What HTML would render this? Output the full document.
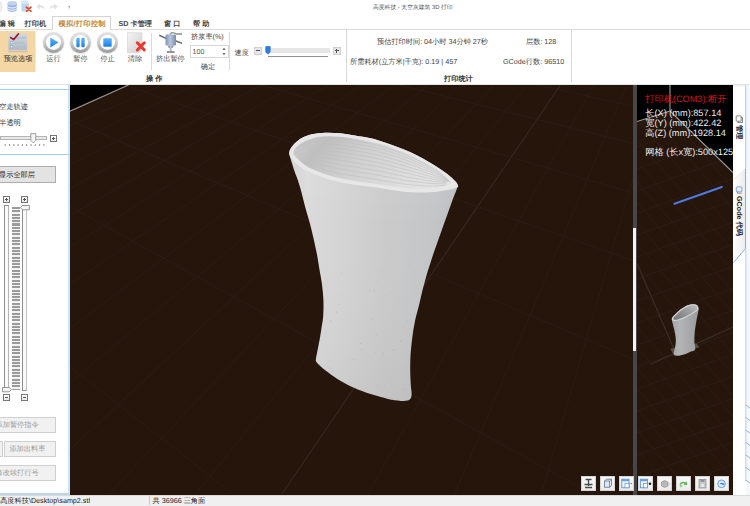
<!DOCTYPE html>
<html lang="zh">
<head>
<meta charset="utf-8">
<title>高度科技 - 太空灰建筑 3D 打印</title>
<style>
*{box-sizing:border-box;margin:0;padding:0}
html,body{width:750px;height:506px;overflow:hidden;background:#fff}
body{font-family:"Liberation Sans",sans-serif;font-size:7.2px;color:#3c3c3c;position:relative;text-rendering:geometricPrecision}
.abs{position:absolute}
.t{position:absolute;white-space:nowrap;line-height:10px;height:10px}
.c{text-align:center}
/* title bar */
#title{left:373px;top:3px;font-size:5.8px;color:#555;width:79px;text-align:center}
/* tabs */
.tab{position:absolute;top:18px;font-weight:bold;font-size:7.2px;color:#444;white-space:nowrap;line-height:11px}
#tabact{position:absolute;left:52px;top:15.5px;width:59px;height:14px;border:1px solid #d4d4d4;border-bottom:none;background:#fff}
#tabline{position:absolute;left:0;top:28.5px;width:750px;height:1px;background:#dcdcdc}
#ribbottom{position:absolute;left:0;top:84px;width:750px;height:1px;background:#e4e4e4}
.vsep{position:absolute;width:1px;background:#dadada}
.lbl{position:absolute;top:54px;height:10px;line-height:10px;color:#555;white-space:nowrap;text-align:center}
.grp{position:absolute;top:74px;height:10px;line-height:10px;color:#333;font-weight:bold;white-space:nowrap}
/* round buttons */
.rb{position:absolute;top:32.3px;width:21px;height:21px;border-radius:50%;background:linear-gradient(#e4e4e4,#d0d0d0 45%,#989898);box-shadow:0 .6px 1.2px rgba(0,0,0,.25)}
.rb i{position:absolute;left:3.1px;top:3.1px;width:14.8px;height:14.8px;border-radius:50%;background:radial-gradient(circle at 50% 35%,#fff 55%,#e6e9ee 100%)}
/* left panel */
#left{position:absolute;left:0;top:85px;width:70.2px;height:409.5px;background:#fff;border-right:2.2px solid #c6e5fa;border-bottom:2.2px solid #b9d6ec}
.hl{position:absolute;left:0;width:68.5px;height:1.1px;background:#a6cbe6}
.btn{position:absolute;height:17px;line-height:15.5px;border:1px solid #adadad;background:#e3e3e3;color:#222;white-space:nowrap}
.btn.dis{background:#f1f1f1;border-color:#cfcfcf;color:#9a9a9a;height:15.5px;line-height:14px}
.pm{position:absolute;width:7.2px;height:7.2px;border:1px solid #777;background:linear-gradient(#fff,#e8e8e8)}
.pm:before{content:"";position:absolute;left:1px;right:1px;top:2px;height:1px;background:#555}
.pm.plus:after{content:"";position:absolute;top:1px;bottom:1px;left:2px;width:1px;background:#555}
/* viewports */
#vp{position:absolute;left:70.2px;top:85px;width:562.8px;height:409.5px;background:#25150b;overflow:hidden}
#split{position:absolute;left:632.6px;top:85px;width:4px;height:409.5px;background:#474747}
#vp2{position:absolute;left:636.5px;top:85px;width:96px;height:409.5px;background:#25150b;overflow:hidden}
.info{position:absolute;left:8.8px;font-size:9.2px;line-height:10px;color:#eeeeee;white-space:nowrap}
#rstrip{position:absolute;left:732.5px;top:85px;width:17.5px;height:409.5px;background:#fff}
#status{position:absolute;left:0;top:494.5px;width:750px;height:11.5px;background:#f0f0f0;border-top:1px solid #d9d9d9}
.tb{position:absolute;top:391px;width:15.2px;height:15.3px;background:linear-gradient(#f8f8f8,#ececec);border:1px solid #d4d4d4}
.vt{position:absolute;white-space:nowrap;font-size:7.2px;font-weight:bold;color:#222;line-height:9px;height:9px;transform-origin:0 0;transform:rotate(90deg)}
</style>
</head>
<body>

<!-- ===== title bar ===== -->
<svg class="abs" style="left:0;top:0" width="80" height="14" viewBox="0 0 80 14">
  <rect x="0" y="1.500" width="2.300" height="10" fill="#ececec"/>
  <path d="M7.500 3.300v6.400c0 1.200 2.100 2.100 4.700 2.100s4.700-.9 4.700-2.100V3.300z" fill="#9db3e6"/>
  <ellipse cx="12.200" cy="3.300" rx="4.700" ry="2.200" fill="#c3d2f2"/>
  <path d="M7.500 5.900c0 1.200 2.100 2.100 4.700 2.100s4.700-.9 4.700-2.100M7.500 8.200c0 1.200 2.100 2.100 4.700 2.100s4.700-.9 4.700-2.100" fill="none" stroke="#f2f5fc" stroke-width="1"/>
  <path d="M21.500 .800h5.300l2 2v8.600h-7.300z" fill="#bcd6f1"/>
  <path d="M21.500 .800h5.300l2 2v1h-7.300z" fill="#d9e8f8"/>
  <path d="M26.600 7.300l4.200 3.800m0-3.800l-4.200 3.800" stroke="#e64a2a" stroke-width="1.900" stroke-linecap="round"/>
  <path d="M36.300 6.600l3.800-3v1.700c2.600 0 4.300 1.300 4.800 3.900-1.300-1.400-2.700-1.800-4.800-1.700v2z" fill="#e2e2e2"/>
  <path d="M58 6.600l-3.800-3v1.700c-2.600 0-4.300 1.300-4.800 3.900 1.300-1.400 2.700-1.800 4.800-1.700v2z" fill="#e2e2e2"/>
  <rect x="68.500" y="5.900" width="1.400" height=".8" fill="#777"/><rect x="68.700" y="7.400" width="1" height=".8" fill="#777"/>
</svg>
<div class="t" id="title">高度科技 - 太空灰建筑 3D 打印</div>

<!-- ===== tabs ===== -->
<div id="tabline"></div>
<div id="tabact"></div>
<div class="tab" style="left:-1.500px">编 辑</div>
<div class="tab" style="left:24.500px">打印机</div>
<div class="tab" style="left:58.500px;color:#c4862a;letter-spacing:.3px">模拟/打印控制</div>
<div class="tab" style="left:118.500px">SD 卡管理</div>
<div class="tab" style="left:164px">窗 口</div>
<div class="tab" style="left:193px">帮 助</div>

<!-- ===== ribbon body ===== -->
<div class="abs" style="left:0;top:30.800px;width:35.800px;height:41.600px;background:#f5d7a6;border-right:1px solid #fae6c8"></div>
<svg class="abs" style="left:8px;top:33px" width="21" height="21" viewBox="0 0 21 21">
  <defs><linearGradient id="ck" x1="0" y1="0" x2="0" y2="1"><stop offset="0" stop-color="#d3d7dc"/><stop offset="1" stop-color="#b4bac2"/></linearGradient></defs>
  <rect x=".4" y=".6" width="18.800" height="16.600" fill="url(#ck)"/>
  <rect x="0" y="18.200" width="20" height="1" fill="#b9b9b9"/>
  <path d="M7 4.900h11M7 9.800h9M7 13.800h11" stroke="#a9bfd8" stroke-width="1.100"/>
  <rect x="2.600" y="8.700" width="2.200" height="2.200" fill="#e6edf4" stroke="#8fa5bd" stroke-width=".5"/>
  <rect x="2.600" y="12.700" width="2.200" height="2.200" fill="#e6edf4" stroke="#8fa5bd" stroke-width=".5"/>
  <path d="M2.700 4.600l3 1.900L10.300 1" fill="none" stroke="#a3122e" stroke-width="1.700" stroke-linecap="round" stroke-linejoin="round"/>
</svg>
<div class="lbl" style="left:0;width:36px;color:#2e2e2e">预览选项</div>

<div class="rb" style="left:43px"><i></i></div>
<svg class="abs" style="left:43px;top:32.300px" width="21" height="21" viewBox="0 0 21 21"><defs><linearGradient id="bl" x1="0" y1="0" x2="0" y2="1"><stop offset="0" stop-color="#5db4ff"/><stop offset="1" stop-color="#1d7fe6"/></linearGradient></defs><path d="M7.300 5.500l8.200 5-8.200 5z" fill="url(#bl)"/></svg>
<div class="lbl" style="left:43px;width:21px">运行</div>

<div class="rb" style="left:70px"><i></i></div>
<svg class="abs" style="left:70px;top:32.300px" width="21" height="21" viewBox="0 0 21 21"><rect x="6.300" y="5.800" width="3.400" height="9.400" rx="1.200" fill="url(#bl)"/><rect x="11.300" y="5.800" width="3.400" height="9.400" rx="1.200" fill="url(#bl)"/></svg>
<div class="lbl" style="left:70px;width:21px">暂停</div>

<div class="rb" style="left:97.200px"><i></i></div>
<svg class="abs" style="left:97.200px;top:32.300px" width="21" height="21" viewBox="0 0 21 21"><rect x="6.300" y="6.300" width="8.400" height="8.400" rx=".8" fill="url(#bl)"/></svg>
<div class="lbl" style="left:97.200px;width:21px">停止</div>

<svg class="abs" style="left:125px;top:31px" width="24" height="24" viewBox="0 0 24 24">
  <defs><linearGradient id="dg" x1="0" y1="0" x2="1" y2="1"><stop offset="0" stop-color="#f4f4f4"/><stop offset="1" stop-color="#cfcfcf"/></linearGradient></defs>
  <path d="M2.500 1.700h14.500v17l-3 3h-11.500z" fill="url(#dg)" stroke="#d0d0d0" stroke-width=".6"/>
  <path d="M12.300 11.800l7 7.200m0-7.200l-7 7.200" stroke="#e8392e" stroke-width="3" stroke-linecap="round"/>
</svg>
<div class="lbl" style="left:124px;width:22px">清除</div>

<div class="vsep" style="left:150.500px;top:32.500px;height:37px"></div>

<svg class="abs" style="left:158px;top:31px" width="26" height="24" viewBox="0 0 26 24">
  <defs><linearGradient id="ex" x1="0" y1="0" x2="1" y2="0"><stop offset="0" stop-color="#8193b4"/><stop offset=".45" stop-color="#b9c6dc"/><stop offset="1" stop-color="#7b8cab"/></linearGradient></defs>
  <path d="M1.300 4.300l7.400 3.400M17.300 9.700l6.700 2.600" stroke="#6f6f6f" stroke-width="1.500"/>
  <path d="M12 4.500c0-2.500 2.500-3.500 4.500-2.500 1 .5 1.500 1 2.500 1h5" fill="none" stroke="#8c8c8c" stroke-width="1.300"/>
  <rect x="7.500" y="3.500" width="10.500" height="11" rx="1.200" fill="url(#ex)"/>
  <path d="M9.500 14.500h6.500l-1.300 2.500h-3.900z" fill="#8c99b2"/>
  <rect x="11.700" y="15" width="2" height="5.500" fill="#b5b9c2"/>
  <rect x="8.700" y="20.300" width="8" height="1.400" fill="#6f6f6f"/>
</svg>
<div class="lbl" style="left:156px;width:28px">挤出暂停</div>

<div class="lbl" style="left:191px;top:32px;width:32px;color:#444">挤浆率(%)</div>
<div class="abs" style="left:190px;top:45px;width:38.500px;height:13px;border:1px solid #d6d6d6;background:#fff"></div>
<div class="t" style="left:192.600px;top:46.500px;color:#555">100</div>
<svg class="abs" style="left:221px;top:46px" width="6" height="11" viewBox="0 0 6 11"><path d="M1.300 3.800L3 2l1.700 1.800zM1.300 7.200L3 9l1.700-1.800z" fill="#444"/></svg>
<div class="lbl" style="left:198px;top:61.500px;width:20px;color:#444">确定</div>
<div class="vsep" style="left:229.300px;top:32px;height:38px"></div>

<div class="t" style="left:234.500px;top:47.500px;color:#444">速度</div>
<div class="abs" style="left:254px;top:47px;width:7.500px;height:7.500px;background:#e6e6e6;border:1px solid #cfcfcf"></div>
<div class="abs" style="left:256px;top:50.300px;width:3.500px;height:1px;background:#555"></div>
<div class="abs" style="left:264.500px;top:48px;width:65.500px;height:5px;background:#e6e6e6"></div>
<div class="abs" style="left:267.500px;top:55.800px;width:60.500px;height:1.400px;background:#909090"></div>
<svg class="abs" style="left:264.500px;top:45.500px" width="7" height="9" viewBox="0 0 7 9"><path d="M.8.500h4.400v5.500L3 8.300.8 6z" fill="#2f80e0" stroke="#1c62b8" stroke-width=".6"/></svg>
<div class="abs" style="left:333px;top:47px;width:7.500px;height:7.500px;background:#e6e6e6;border:1px solid #cfcfcf"></div>
<div class="abs" style="left:335px;top:50.300px;width:3.500px;height:1px;background:#555"></div>
<div class="abs" style="left:336.250px;top:49px;width:1px;height:3.500px;background:#555"></div>

<div class="grp" style="left:146px">操 作</div>
<div class="vsep" style="left:346px;top:29px;height:53px"></div>

<div class="t" style="left:377px;top:36.500px;color:#444">预估打印时间: 04小时 34分钟 27秒</div>
<div class="t" style="left:526px;top:36.500px;color:#444">层数: 128</div>
<div class="t" style="left:350px;top:56.800px;color:#444">所需耗材(立方米|千克): 0.19 | 457</div>
<div class="t" style="left:503px;top:56.800px;color:#444">GCode行数: 96510</div>
<div class="grp" style="left:444px">打印统计</div>
<div class="vsep" style="left:571px;top:29px;height:53px"></div>
<div id="ribbottom"></div>

<!-- ===== left panel ===== -->
<div id="left">
  <div class="hl" style="top:4px"></div>
  <div class="t" style="left:-.8px;top:16.500px;color:#333">空走轨迹</div>
  <div class="t" style="left:-.8px;top:32.500px;color:#333">半透明</div>
  <div class="abs" style="left:0;top:51px;width:46.500px;height:4px;border:1px solid #b5b5b5;background:#e9e9e9"></div>
  <svg class="abs" style="left:29.500px;top:48px" width="7" height="11" viewBox="0 0 7 11"><path d="M.8.600h5v6.800L3.300 10 .8 7.400z" fill="#f4f4f4" stroke="#8a8a8a" stroke-width=".8"/></svg>
  <div class="pm plus" style="left:49.500px;top:49.800px"></div>
  <svg class="abs" style="left:0;top:58.500px" width="48" height="3" viewBox="0 0 48 3"><path d="M5.2 0v2M9.5 0v2M13.8 0v2M18.1 0v2M22.4 0v2M26.7 0v2M31.0 0v2M35.3 0v2M39.6 0v2M43.9 0v2" stroke="#777" stroke-width=".8"/></svg>
  <div class="hl" style="top:69px"></div>
  <div class="btn" style="left:-6px;top:80.800px;width:62.300px;padding-left:4px">显示全部层</div>

  <div class="pm plus" style="left:3.200px;top:110.500px"></div>
  <div class="pm plus" style="left:21.300px;top:110.500px"></div>
  <!-- vertical sliders -->
  <div class="abs" style="left:4.300px;top:120.200px;width:4.600px;height:186px;border:1px solid #8e8e8e;border-right-color:#b4b4b4;background:#fafafa"></div>
  <div class="abs" style="left:11.900px;top:122px;width:7.900px;height:182.500px;background:repeating-linear-gradient(#9b9b9b 0,#9b9b9b 2px,#f3f3f3 2px,#f3f3f3 3.300px)"></div>
  <div class="abs" style="left:22.100px;top:120.200px;width:5.400px;height:186px;border:1px solid #8e8e8e;border-right-color:#c4c4c4;background:#fafafa"></div>
  <svg class="abs" style="left:20.200px;top:120px" width="10" height="6" viewBox="0 0 10 6"><path d="M2.500.500h6.900v4.300H2.500L.5 2.600z" fill="#f6f6f6" stroke="#7d7d7d" stroke-width=".8"/></svg>
  <svg class="abs" style="left:1.500px;top:301.500px" width="10" height="6" viewBox="0 0 10 6"><path d="M7.300.500H.5v4.300h6.800l2-2.200z" fill="#f6f6f6" stroke="#7d7d7d" stroke-width=".8"/></svg>
  <div class="pm" style="left:3.200px;top:309.100px"></div>
  <div class="pm" style="left:21.300px;top:309.100px"></div>

  <div class="btn dis" style="left:-6px;top:332px;width:61.500px;padding-left:.5px">添加暂停指令</div>
  <div class="btn dis" style="left:-6px;top:356px;width:9px"></div>
  <div class="btn dis" style="left:4px;top:356px;width:51.500px;padding-left:4.400px">添加出料率</div>
  <div class="btn dis" style="left:-6px;top:380px;width:61.500px;padding-left:.5px">修改续打行号</div>
</div>

<!-- ===== main viewport ===== -->
<div id="vp">
<svg class="abs" style="left:0;top:0" width="563" height="410" viewBox="0 0 563 410">
  <defs>
    <linearGradient id="body" x1="0" y1="0" x2="1" y2="0">
      <stop offset="0" stop-color="#d0d0d0"/><stop offset=".1" stop-color="#dadada"/><stop offset=".3" stop-color="#d4d4d4"/><stop offset=".55" stop-color="#cbcbcb"/><stop offset=".85" stop-color="#c4c5c7"/><stop offset="1" stop-color="#bbbec3"/>
    </linearGradient>
    <linearGradient id="bodyv" x1="0" y1="0" x2="0" y2="1">
      <stop offset="0" stop-color="#fff" stop-opacity=".12"/><stop offset=".35" stop-color="#fff" stop-opacity="0"/><stop offset="1" stop-color="#000" stop-opacity=".04"/>
    </linearGradient>
    <clipPath id="vclip"><path d="M289.3 152.3C289.0 155.0 290.4 157.8 291.3 161.0C292.2 164.2 293.6 168.5 294.7 171.7C295.8 174.9 296.7 176.6 297.8 180.0C298.9 183.4 300.1 187.2 301.4 191.9C302.7 196.7 304.2 203.4 305.6 208.5C307.0 213.6 308.4 217.9 309.7 222.7C311.0 227.4 312.0 231.8 313.2 237.0C314.4 242.2 315.7 248.1 316.8 253.6C317.9 259.1 318.7 265.1 319.6 270.2C320.5 275.3 321.4 279.5 322.0 284.5C322.6 289.5 323.2 294.8 323.4 300.0C323.6 305.2 323.5 311.3 323.2 316.0C322.9 320.7 322.1 324.0 321.5 328.0C320.9 332.0 320.3 335.9 319.6 339.8C318.9 343.7 317.9 348.4 317.3 351.6C316.7 354.8 316.1 357.0 316.0 358.8C315.9 360.6 315.2 360.5 316.8 362.5C318.4 364.5 322.2 367.9 325.6 370.6C329.0 373.3 333.1 376.2 337.4 378.9C341.7 381.6 346.9 384.4 351.6 386.7C356.4 388.9 360.4 390.5 365.9 392.4C371.4 394.3 380.5 396.7 384.8 397.9C389.1 399.1 388.8 399.2 391.9 399.7C395.0 400.2 400.7 401.0 403.7 401.0C406.7 401.0 408.4 400.7 409.7 399.6C411.0 398.5 411.4 396.9 411.6 394.5C411.8 392.1 411.0 389.0 410.8 385.0C410.6 381.0 410.2 375.9 410.2 370.7C410.2 365.5 410.2 359.5 410.6 354.0C411.0 348.5 411.6 343.0 412.3 337.5C413.0 332.0 413.8 326.5 415.0 320.9C416.2 315.3 418.1 309.0 419.3 304.0C420.5 299.0 421.2 295.3 422.3 291.0C423.4 286.7 424.5 282.7 425.8 278.0C427.1 273.3 428.8 267.9 430.4 263.0C431.9 258.1 433.3 253.9 435.1 248.8C436.9 243.7 439.0 237.7 441.0 232.2C443.0 226.7 445.0 221.1 447.0 215.6C449.0 210.1 451.2 203.5 452.9 199.0C454.6 194.5 456.2 190.8 457.0 188.5C457.8 186.2 458.2 186.7 457.9 185.5C457.6 184.3 457.1 183.2 455.3 181.3C453.5 179.4 450.4 176.4 447.3 174.0C444.2 171.6 440.7 169.2 436.7 166.7C432.7 164.1 427.8 161.1 423.3 158.7C418.9 156.2 414.4 154.0 410.0 152.0C405.6 150.0 401.1 148.4 396.7 146.7C392.2 145.0 387.6 143.4 383.3 142.0C379.0 140.6 375.5 139.4 370.7 138.3C365.9 137.2 359.8 136.2 354.7 135.4C349.6 134.6 344.9 133.8 340.0 133.3C335.1 132.9 330.0 132.5 325.3 132.7C320.6 132.9 316.0 133.4 312.0 134.3C308.0 135.2 304.4 136.5 301.3 138.3C298.2 140.1 295.3 142.7 293.3 145.0C291.3 147.3 289.6 149.6 289.3 152.3Z"/></clipPath>
    <linearGradient id="inner" x1="0" y1="0" x2="1" y2=".3">
      <stop offset="0" stop-color="#cecece"/><stop offset=".22" stop-color="#bfbfbf"/><stop offset=".5" stop-color="#d0d0d0"/><stop offset="1" stop-color="#e2e2e2"/>
    </linearGradient>
  </defs>
  <!-- black beyond floor edge -->
  <path d="M0 0h58.700L0 26.200z" fill="#000"/>
  <g fill="none">
<line x1="563.0" y1="376.8" x2="557.8" y2="409.5" stroke="#2c1d15" stroke-width="0.9"/>
<line x1="563.0" y1="93.2" x2="471.2" y2="409.5" stroke="#2c1d15" stroke-width="0.9"/>
<line x1="556.8" y1="0.0" x2="384.7" y2="409.5" stroke="#2c1d15" stroke-width="0.9"/>
<line x1="523.6" y1="0.0" x2="298.2" y2="409.5" stroke="#2c1d15" stroke-width="0.9"/>
<line x1="490.4" y1="0.0" x2="211.6" y2="409.5" stroke="#362921" stroke-width="1.1"/>
<line x1="457.2" y1="0.0" x2="125.1" y2="409.5" stroke="#2c1d15" stroke-width="0.9"/>
<line x1="424.0" y1="0.0" x2="38.6" y2="409.5" stroke="#2c1d15" stroke-width="0.9"/>
<line x1="390.8" y1="0.0" x2="0.0" y2="364.7" stroke="#2c1d15" stroke-width="0.9"/>
<line x1="357.6" y1="0.0" x2="0.0" y2="297.6" stroke="#2c1d15" stroke-width="0.9"/>
<line x1="324.4" y1="0.0" x2="0.0" y2="243.5" stroke="#2c1d15" stroke-width="0.9"/>
<line x1="291.2" y1="0.0" x2="0.0" y2="199.1" stroke="#2c1d15" stroke-width="0.9"/>
<line x1="258.0" y1="0.0" x2="0.0" y2="162.0" stroke="#2c1d15" stroke-width="0.9"/>
<line x1="224.7" y1="0.0" x2="0.0" y2="130.5" stroke="#2c1d15" stroke-width="0.9"/>
<line x1="191.5" y1="0.0" x2="0.0" y2="103.4" stroke="#2c1d15" stroke-width="0.9"/>
<line x1="158.3" y1="0.0" x2="0.0" y2="79.8" stroke="#2c1d15" stroke-width="0.9"/>
<line x1="125.1" y1="0.0" x2="0.0" y2="59.2" stroke="#2c1d15" stroke-width="0.9"/>
<line x1="91.9" y1="0.0" x2="0.0" y2="41.0" stroke="#2c1d15" stroke-width="0.9"/>
<line x1="0.0" y1="281.4" x2="163.4" y2="409.5" stroke="#2c1d15" stroke-width="0.9"/>
<line x1="0.0" y1="121.7" x2="523.1" y2="409.5" stroke="#2c1d15" stroke-width="0.9"/>
<line x1="0.0" y1="35.4" x2="563.0" y2="274.0" stroke="#2c1d15" stroke-width="0.9"/>
<line x1="54.1" y1="0.0" x2="563.0" y2="175.3" stroke="#2c1d15" stroke-width="0.9"/>
<line x1="191.8" y1="0.0" x2="563.0" y2="107.8" stroke="#2c1d15" stroke-width="0.9"/>
<line x1="329.6" y1="0.0" x2="563.0" y2="58.6" stroke="#2c1d15" stroke-width="0.9"/>
<line x1="467.3" y1="0.0" x2="563.0" y2="21.1" stroke="#2c1d15" stroke-width="0.9"/>
  </g>
  <path d="M0 26.200L58.500 0" stroke="#98938e" stroke-width="1.200"/>
  <!-- vase: coordinates are page coords shifted by (-70,-85) -->
  <g transform="translate(-70,-85)">
    <path d="M289.3 152.3C289.0 155.0 290.4 157.8 291.3 161.0C292.2 164.2 293.6 168.5 294.7 171.7C295.8 174.9 296.7 176.6 297.8 180.0C298.9 183.4 300.1 187.2 301.4 191.9C302.7 196.7 304.2 203.4 305.6 208.5C307.0 213.6 308.4 217.9 309.7 222.7C311.0 227.4 312.0 231.8 313.2 237.0C314.4 242.2 315.7 248.1 316.8 253.6C317.9 259.1 318.7 265.1 319.6 270.2C320.5 275.3 321.4 279.5 322.0 284.5C322.6 289.5 323.2 294.8 323.4 300.0C323.6 305.2 323.5 311.3 323.2 316.0C322.9 320.7 322.1 324.0 321.5 328.0C320.9 332.0 320.3 335.9 319.6 339.8C318.9 343.7 317.9 348.4 317.3 351.6C316.7 354.8 316.1 357.0 316.0 358.8C315.9 360.6 315.2 360.5 316.8 362.5C318.4 364.5 322.2 367.9 325.6 370.6C329.0 373.3 333.1 376.2 337.4 378.9C341.7 381.6 346.9 384.4 351.6 386.7C356.4 388.9 360.4 390.5 365.9 392.4C371.4 394.3 380.5 396.7 384.8 397.9C389.1 399.1 388.8 399.2 391.9 399.7C395.0 400.2 400.7 401.0 403.7 401.0C406.7 401.0 408.4 400.7 409.7 399.6C411.0 398.5 411.4 396.9 411.6 394.5C411.8 392.1 411.0 389.0 410.8 385.0C410.6 381.0 410.2 375.9 410.2 370.7C410.2 365.5 410.2 359.5 410.6 354.0C411.0 348.5 411.6 343.0 412.3 337.5C413.0 332.0 413.8 326.5 415.0 320.9C416.2 315.3 418.1 309.0 419.3 304.0C420.5 299.0 421.2 295.3 422.3 291.0C423.4 286.7 424.5 282.7 425.8 278.0C427.1 273.3 428.8 267.9 430.4 263.0C431.9 258.1 433.3 253.9 435.1 248.8C436.9 243.7 439.0 237.7 441.0 232.2C443.0 226.7 445.0 221.1 447.0 215.6C449.0 210.1 451.2 203.5 452.9 199.0C454.6 194.5 456.2 190.8 457.0 188.5C457.8 186.2 458.2 186.7 457.9 185.5C457.6 184.3 457.1 183.2 455.3 181.3C453.5 179.4 450.4 176.4 447.3 174.0C444.2 171.6 440.7 169.2 436.7 166.7C432.7 164.1 427.8 161.1 423.3 158.7C418.9 156.2 414.4 154.0 410.0 152.0C405.6 150.0 401.1 148.4 396.7 146.7C392.2 145.0 387.6 143.4 383.3 142.0C379.0 140.6 375.5 139.4 370.7 138.3C365.9 137.2 359.8 136.2 354.7 135.4C349.6 134.6 344.9 133.8 340.0 133.3C335.1 132.9 330.0 132.5 325.3 132.7C320.6 132.9 316.0 133.4 312.0 134.3C308.0 135.2 304.4 136.5 301.3 138.3C298.2 140.1 295.3 142.7 293.3 145.0C291.3 147.3 289.6 149.6 289.3 152.3Z" fill="url(#body)"/>
    <path d="M289.3 152.3C289.0 155.0 290.4 157.8 291.3 161.0C292.2 164.2 293.6 168.5 294.7 171.7C295.8 174.9 296.7 176.6 297.8 180.0C298.9 183.4 300.1 187.2 301.4 191.9C302.7 196.7 304.2 203.4 305.6 208.5C307.0 213.6 308.4 217.9 309.7 222.7C311.0 227.4 312.0 231.8 313.2 237.0C314.4 242.2 315.7 248.1 316.8 253.6C317.9 259.1 318.7 265.1 319.6 270.2C320.5 275.3 321.4 279.5 322.0 284.5C322.6 289.5 323.2 294.8 323.4 300.0C323.6 305.2 323.5 311.3 323.2 316.0C322.9 320.7 322.1 324.0 321.5 328.0C320.9 332.0 320.3 335.9 319.6 339.8C318.9 343.7 317.9 348.4 317.3 351.6C316.7 354.8 316.1 357.0 316.0 358.8C315.9 360.6 315.2 360.5 316.8 362.5C318.4 364.5 322.2 367.9 325.6 370.6C329.0 373.3 333.1 376.2 337.4 378.9C341.7 381.6 346.9 384.4 351.6 386.7C356.4 388.9 360.4 390.5 365.9 392.4C371.4 394.3 380.5 396.7 384.8 397.9C389.1 399.1 388.8 399.2 391.9 399.7C395.0 400.2 400.7 401.0 403.7 401.0C406.7 401.0 408.4 400.7 409.7 399.6C411.0 398.5 411.4 396.9 411.6 394.5C411.8 392.1 411.0 389.0 410.8 385.0C410.6 381.0 410.2 375.9 410.2 370.7C410.2 365.5 410.2 359.5 410.6 354.0C411.0 348.5 411.6 343.0 412.3 337.5C413.0 332.0 413.8 326.5 415.0 320.9C416.2 315.3 418.1 309.0 419.3 304.0C420.5 299.0 421.2 295.3 422.3 291.0C423.4 286.7 424.5 282.7 425.8 278.0C427.1 273.3 428.8 267.9 430.4 263.0C431.9 258.1 433.3 253.9 435.1 248.8C436.9 243.7 439.0 237.7 441.0 232.2C443.0 226.7 445.0 221.1 447.0 215.6C449.0 210.1 451.2 203.5 452.9 199.0C454.6 194.5 456.2 190.8 457.0 188.5C457.8 186.2 458.2 186.7 457.9 185.5C457.6 184.3 457.1 183.2 455.3 181.3C453.5 179.4 450.4 176.4 447.3 174.0C444.2 171.6 440.7 169.2 436.7 166.7C432.7 164.1 427.8 161.1 423.3 158.7C418.9 156.2 414.4 154.0 410.0 152.0C405.6 150.0 401.1 148.4 396.7 146.7C392.2 145.0 387.6 143.4 383.3 142.0C379.0 140.6 375.5 139.4 370.7 138.3C365.9 137.2 359.8 136.2 354.7 135.4C349.6 134.6 344.9 133.8 340.0 133.3C335.1 132.9 330.0 132.5 325.3 132.7C320.6 132.9 316.0 133.4 312.0 134.3C308.0 135.2 304.4 136.5 301.3 138.3C298.2 140.1 295.3 142.7 293.3 145.0C291.3 147.3 289.6 149.6 289.3 152.3Z" fill="url(#bodyv)"/>
    <g clip-path="url(#vclip)" fill="#a9a9a9">
<circle cx="331.3" cy="287.8" r="0.35" opacity="0.30"/>
<circle cx="358.8" cy="322.3" r="0.35" opacity="0.76"/>
<circle cx="323.0" cy="270.0" r="0.5" opacity="0.21"/>
<circle cx="366.3" cy="249.8" r="0.6" opacity="0.13"/>
<circle cx="392.3" cy="271.4" r="0.35" opacity="0.35"/>
<circle cx="437.0" cy="299.7" r="0.35" opacity="0.56"/>
<circle cx="365.6" cy="256.7" r="0.6" opacity="0.16"/>
<circle cx="416.5" cy="285.3" r="0.4" opacity="0.30"/>
<circle cx="336.0" cy="328.1" r="0.35" opacity="0.60"/>
<circle cx="319.6" cy="245.2" r="0.4" opacity="0.15"/>
<circle cx="411.5" cy="321.7" r="0.5" opacity="0.61"/>
<circle cx="350.4" cy="308.9" r="0.4" opacity="0.66"/>
<circle cx="385.5" cy="274.8" r="0.6" opacity="0.36"/>
<circle cx="369.5" cy="291.0" r="0.6" opacity="0.65"/>
<circle cx="365.5" cy="254.2" r="0.45" opacity="0.15"/>
<circle cx="317.0" cy="314.7" r="0.35" opacity="0.69"/>
<circle cx="424.1" cy="328.4" r="0.45" opacity="0.50"/>
<circle cx="375.6" cy="292.1" r="0.5" opacity="0.32"/>
<circle cx="346.6" cy="250.3" r="0.35" opacity="0.12"/>
<circle cx="394.8" cy="349.3" r="0.5" opacity="0.48"/>
<circle cx="397.6" cy="297.9" r="0.35" opacity="0.70"/>
<circle cx="390.2" cy="292.9" r="0.5" opacity="0.32"/>
<circle cx="328.6" cy="360.2" r="0.4" opacity="0.53"/>
<circle cx="375.6" cy="384.4" r="0.4" opacity="0.55"/>
<circle cx="425.1" cy="324.6" r="0.5" opacity="0.74"/>
<circle cx="365.2" cy="280.4" r="0.45" opacity="0.45"/>
<circle cx="341.5" cy="297.0" r="0.35" opacity="0.39"/>
<circle cx="341.9" cy="272.8" r="0.5" opacity="0.43"/>
<circle cx="348.1" cy="264.7" r="0.4" opacity="0.27"/>
<circle cx="384.5" cy="295.2" r="0.4" opacity="0.58"/>
<circle cx="391.1" cy="319.0" r="0.35" opacity="0.56"/>
<circle cx="433.8" cy="377.0" r="0.6" opacity="0.53"/>
<circle cx="325.3" cy="300.0" r="0.5" opacity="0.35"/>
<circle cx="338.7" cy="246.0" r="0.4" opacity="0.10"/>
<circle cx="325.1" cy="332.9" r="0.6" opacity="0.42"/>
<circle cx="358.5" cy="251.5" r="0.35" opacity="0.13"/>
<circle cx="360.2" cy="268.9" r="0.45" opacity="0.43"/>
<circle cx="372.7" cy="333.2" r="0.35" opacity="0.73"/>
<circle cx="371.6" cy="396.9" r="0.5" opacity="0.49"/>
<circle cx="408.0" cy="258.5" r="0.45" opacity="0.24"/>
<circle cx="378.1" cy="347.8" r="0.4" opacity="0.78"/>
<circle cx="330.8" cy="321.1" r="0.6" opacity="0.76"/>
<circle cx="350.2" cy="358.6" r="0.35" opacity="0.66"/>
<circle cx="358.9" cy="277.6" r="0.4" opacity="0.34"/>
<circle cx="381.3" cy="271.3" r="0.6" opacity="0.29"/>
<circle cx="415.9" cy="271.4" r="0.4" opacity="0.41"/>
<circle cx="406.7" cy="368.4" r="0.4" opacity="0.44"/>
<circle cx="405.6" cy="315.3" r="0.35" opacity="0.71"/>
<circle cx="336.8" cy="312.0" r="0.6" opacity="0.78"/>
<circle cx="431.9" cy="307.9" r="0.45" opacity="0.78"/>
<circle cx="340.2" cy="294.4" r="0.4" opacity="0.49"/>
<circle cx="373.8" cy="290.1" r="0.6" opacity="0.59"/>
<circle cx="395.6" cy="313.2" r="0.35" opacity="0.73"/>
<circle cx="361.7" cy="254.5" r="0.4" opacity="0.21"/>
<circle cx="413.0" cy="264.1" r="0.45" opacity="0.19"/>
<circle cx="404.4" cy="389.2" r="0.5" opacity="0.53"/>
<circle cx="404.8" cy="389.3" r="0.4" opacity="0.80"/>
<circle cx="387.6" cy="239.5" r="0.5" opacity="0.13"/>
<circle cx="417.8" cy="258.8" r="0.5" opacity="0.27"/>
<circle cx="382.2" cy="292.1" r="0.4" opacity="0.30"/>
<circle cx="405.0" cy="365.3" r="0.35" opacity="0.59"/>
<circle cx="367.5" cy="387.2" r="0.4" opacity="0.72"/>
<circle cx="344.2" cy="269.4" r="0.45" opacity="0.32"/>
<circle cx="353.7" cy="359.5" r="0.6" opacity="0.54"/>
<circle cx="428.5" cy="256.4" r="0.45" opacity="0.30"/>
<circle cx="416.3" cy="343.0" r="0.6" opacity="0.54"/>
<circle cx="376.2" cy="384.6" r="0.6" opacity="0.42"/>
<circle cx="423.7" cy="318.2" r="0.4" opacity="0.62"/>
<circle cx="331.2" cy="361.5" r="0.4" opacity="0.56"/>
<circle cx="383.2" cy="353.2" r="0.45" opacity="0.66"/>
<circle cx="373.8" cy="321.5" r="0.35" opacity="0.75"/>
<circle cx="336.5" cy="244.3" r="0.35" opacity="0.17"/>
<circle cx="383.9" cy="317.8" r="0.35" opacity="0.55"/>
<circle cx="376.7" cy="334.8" r="0.6" opacity="0.44"/>
<circle cx="377.0" cy="280.2" r="0.5" opacity="0.40"/>
<circle cx="379.0" cy="275.4" r="0.45" opacity="0.48"/>
<circle cx="337.9" cy="380.5" r="0.5" opacity="0.41"/>
<circle cx="368.6" cy="254.8" r="0.35" opacity="0.24"/>
<circle cx="339.2" cy="304.8" r="0.45" opacity="0.70"/>
<circle cx="331.8" cy="381.2" r="0.45" opacity="0.41"/>
<circle cx="435.8" cy="378.9" r="0.4" opacity="0.69"/>
<circle cx="425.3" cy="250.3" r="0.4" opacity="0.25"/>
<circle cx="332.7" cy="370.7" r="0.5" opacity="0.80"/>
<circle cx="365.9" cy="300.8" r="0.45" opacity="0.47"/>
<circle cx="314.5" cy="352.7" r="0.6" opacity="0.56"/>
<circle cx="361.2" cy="349.6" r="0.6" opacity="0.63"/>
<circle cx="320.2" cy="318.5" r="0.4" opacity="0.79"/>
<circle cx="346.0" cy="252.1" r="0.35" opacity="0.26"/>
<circle cx="408.7" cy="264.6" r="0.5" opacity="0.36"/>
<circle cx="433.1" cy="345.2" r="0.5" opacity="0.42"/>
<circle cx="385.0" cy="384.8" r="0.45" opacity="0.39"/>
<circle cx="400.1" cy="244.4" r="0.5" opacity="0.18"/>
<circle cx="314.2" cy="278.8" r="0.35" opacity="0.48"/>
<circle cx="421.6" cy="248.7" r="0.35" opacity="0.14"/>
<circle cx="313.5" cy="254.8" r="0.6" opacity="0.20"/>
<circle cx="391.6" cy="384.2" r="0.35" opacity="0.59"/>
<circle cx="326.0" cy="273.9" r="0.4" opacity="0.29"/>
<circle cx="431.3" cy="264.5" r="0.45" opacity="0.29"/>
<circle cx="369.0" cy="268.6" r="0.4" opacity="0.26"/>
<circle cx="439.3" cy="366.0" r="0.35" opacity="0.36"/>
<circle cx="382.5" cy="354.5" r="0.4" opacity="0.58"/>
<circle cx="369.2" cy="275.0" r="0.5" opacity="0.40"/>
<circle cx="425.8" cy="324.0" r="0.6" opacity="0.49"/>
<circle cx="341.4" cy="270.1" r="0.4" opacity="0.41"/>
<circle cx="393.4" cy="350.2" r="0.5" opacity="0.80"/>
<circle cx="419.1" cy="395.0" r="0.35" opacity="0.38"/>
<circle cx="344.7" cy="355.8" r="0.4" opacity="0.37"/>
<circle cx="360.8" cy="343.4" r="0.6" opacity="0.65"/>
<circle cx="343.0" cy="281.0" r="0.45" opacity="0.26"/>
<circle cx="346.4" cy="265.2" r="0.35" opacity="0.24"/>
<circle cx="436.5" cy="391.8" r="0.6" opacity="0.50"/>
<circle cx="424.9" cy="240.6" r="0.4" opacity="0.10"/>
<circle cx="360.8" cy="235.2" r="0.5" opacity="0.06"/>
<circle cx="343.8" cy="341.9" r="0.35" opacity="0.39"/>
<circle cx="330.4" cy="368.2" r="0.6" opacity="0.37"/>
<circle cx="350.9" cy="238.7" r="0.4" opacity="0.07"/>
<circle cx="421.2" cy="391.1" r="0.4" opacity="0.65"/>
<circle cx="424.5" cy="351.7" r="0.5" opacity="0.69"/>
<circle cx="375.3" cy="352.5" r="0.45" opacity="0.68"/>
<circle cx="317.6" cy="339.8" r="0.6" opacity="0.63"/>
<circle cx="416.0" cy="354.6" r="0.4" opacity="0.76"/>
<circle cx="384.8" cy="357.7" r="0.35" opacity="0.72"/>
<circle cx="426.3" cy="330.2" r="0.4" opacity="0.39"/>
<circle cx="393.6" cy="241.8" r="0.35" opacity="0.11"/>
<circle cx="318.5" cy="308.6" r="0.35" opacity="0.63"/>
<circle cx="374.6" cy="345.9" r="0.35" opacity="0.56"/>
<circle cx="431.4" cy="246.4" r="0.6" opacity="0.10"/>
<circle cx="407.5" cy="320.7" r="0.5" opacity="0.46"/>
<circle cx="346.0" cy="247.1" r="0.4" opacity="0.13"/>
<circle cx="370.9" cy="340.9" r="0.5" opacity="0.38"/>
<circle cx="348.8" cy="383.4" r="0.35" opacity="0.63"/>
<circle cx="321.9" cy="339.8" r="0.4" opacity="0.50"/>
<circle cx="400.7" cy="341.2" r="0.6" opacity="0.61"/>
<circle cx="319.8" cy="237.0" r="0.45" opacity="0.12"/>
<circle cx="339.9" cy="251.2" r="0.5" opacity="0.16"/>
<circle cx="371.5" cy="319.2" r="0.5" opacity="0.70"/>
<circle cx="382.3" cy="396.9" r="0.45" opacity="0.79"/>
<circle cx="314.2" cy="387.6" r="0.5" opacity="0.38"/>
<circle cx="439.3" cy="317.6" r="0.45" opacity="0.52"/>
<circle cx="431.1" cy="384.4" r="0.35" opacity="0.61"/>
    </g>
    <path d="M289.3 152.3C289.0 154.6 290.1 156.4 291.5 158.5C292.9 160.6 295.3 162.9 298.0 165.0C300.7 167.1 303.4 169.2 307.5 171.3C311.6 173.4 317.2 175.5 322.5 177.3C327.8 179.1 332.8 180.6 339.0 181.9C345.2 183.2 352.8 184.3 359.5 185.3C366.2 186.3 373.6 187.2 379.5 188.1C385.4 189.0 389.9 189.9 395.0 190.6C400.1 191.3 404.2 192.0 410.0 192.3C415.8 192.6 424.0 192.6 430.0 192.3C436.0 192.0 441.5 191.1 446.0 190.3C450.5 189.5 455.0 188.3 457.0 187.5C459.0 186.7 458.2 186.5 457.9 185.5C457.6 184.5 457.1 183.2 455.3 181.3C453.5 179.4 450.4 176.4 447.3 174.0C444.2 171.6 440.7 169.2 436.7 166.7C432.7 164.1 427.8 161.1 423.3 158.7C418.9 156.2 414.4 154.0 410.0 152.0C405.6 150.0 401.1 148.4 396.7 146.7C392.2 145.0 387.6 143.4 383.3 142.0C379.0 140.6 375.5 139.4 370.7 138.3C365.9 137.2 359.8 136.2 354.7 135.4C349.6 134.6 344.9 133.8 340.0 133.3C335.1 132.9 330.0 132.5 325.3 132.7C320.6 132.9 316.0 133.4 312.0 134.3C308.0 135.2 304.4 136.5 301.3 138.3C298.2 140.1 295.3 142.7 293.3 145.0C291.3 147.3 289.6 150.1 289.3 152.3Z" fill="#e7e7e7"/>
    <path d="M293.3 153.0C293.8 155.4 297.3 158.6 300.0 161.0C302.7 163.4 305.3 165.6 309.3 167.7C313.3 169.8 318.9 171.9 324.0 173.7C329.1 175.5 334.0 177.0 340.0 178.3C346.0 179.6 353.3 180.7 360.0 181.7C366.7 182.7 374.2 183.6 380.0 184.5C385.8 185.4 390.0 186.3 395.0 187.0C400.0 187.7 404.2 188.4 410.0 188.7C415.8 189.0 424.2 189.0 430.0 188.7C435.8 188.4 441.2 187.7 444.7 186.7C448.1 185.7 450.6 184.6 450.7 182.7C450.8 180.8 447.3 177.7 445.0 175.5C442.7 173.3 440.3 171.8 436.7 169.5C433.1 167.2 427.8 163.9 423.3 161.5C418.9 159.1 414.4 156.8 410.0 154.8C405.6 152.8 401.1 151.2 396.7 149.5C392.2 147.8 387.6 146.1 383.3 144.8C379.0 143.5 375.5 142.7 370.7 141.7C365.9 140.7 359.8 139.5 354.7 138.7C349.6 137.9 344.9 137.1 340.0 136.7C335.1 136.3 329.5 136.1 325.3 136.3C321.1 136.5 318.0 136.9 314.7 137.7C311.4 138.5 308.2 139.6 305.3 141.0C302.4 142.4 299.3 144.3 297.3 146.3C295.3 148.3 292.9 150.6 293.3 153.0Z" fill="url(#inner)"/>
    <g fill="none" stroke="#bdbdbd" stroke-width=".6" opacity=".9">
<path d="M296.0 148.8C297.9 147.6 303.4 143.3 307.0 141.7C310.7 140.0 314.4 139.5 318.0 139.0C321.7 138.4 325.4 138.4 329.1 138.3C332.7 138.3 336.4 138.5 340.1 138.8C343.7 139.1 347.4 139.7 351.1 140.3C354.7 140.9 358.4 141.5 362.1 142.2C365.8 142.9 369.4 143.5 373.1 144.3C376.8 145.2 380.4 146.0 384.1 147.1C387.8 148.2 391.4 149.5 395.1 150.8C398.8 152.2 402.4 153.5 406.1 155.0C409.8 156.5 413.5 158.1 417.1 159.9C420.8 161.7 424.5 163.6 428.1 165.6C431.8 167.6 435.5 169.3 439.1 172.1C442.8 174.8 448.3 180.4 450.2 182.1"/>
<path d="M298.8 147.0C300.6 146.3 305.9 143.9 309.5 142.9C313.1 141.9 316.7 141.4 320.3 141.1C323.9 140.9 327.5 141.0 331.1 141.1C334.7 141.2 338.3 141.5 341.9 141.9C345.4 142.3 349.0 142.8 352.6 143.4C356.2 144.0 359.8 144.6 363.4 145.3C367.0 146.0 370.6 146.6 374.2 147.4C377.8 148.2 381.4 149.1 385.0 150.1C388.5 151.2 392.1 152.4 395.7 153.7C399.3 154.9 402.9 156.2 406.5 157.6C410.1 159.0 413.7 160.4 417.3 162.1C420.9 163.7 424.5 165.4 428.1 167.2C431.7 169.1 435.2 170.6 438.8 173.0C442.4 175.4 447.8 180.1 449.6 181.6"/>
<path d="M301.5 147.2C303.2 146.8 308.5 145.1 312.0 144.6C315.5 144.0 319.1 143.9 322.6 143.8C326.1 143.8 329.6 144.1 333.1 144.4C336.6 144.6 340.1 145.0 343.6 145.4C347.2 145.8 350.7 146.4 354.2 146.9C357.7 147.5 361.2 148.2 364.7 148.8C368.2 149.5 371.8 150.1 375.3 150.9C378.8 151.7 382.3 152.5 385.8 153.5C389.3 154.5 392.8 155.7 396.4 156.8C399.9 158.0 403.4 159.1 406.9 160.4C410.4 161.7 413.9 163.0 417.4 164.5C421.0 165.9 424.5 167.5 428.0 169.1C431.5 170.7 435.0 172.1 438.5 174.1C442.0 176.1 447.3 180.1 449.1 181.3"/>
<path d="M304.2 148.0C305.9 147.8 311.1 147.0 314.5 146.8C318.0 146.6 321.4 146.8 324.8 147.0C328.3 147.2 331.7 147.6 335.1 148.0C338.6 148.3 342.0 148.8 345.4 149.2C348.9 149.7 352.3 150.2 355.7 150.8C359.2 151.3 362.6 152.0 366.1 152.6C369.5 153.3 372.9 153.9 376.4 154.6C379.8 155.4 383.2 156.2 386.7 157.2C390.1 158.1 393.5 159.2 397.0 160.2C400.4 161.3 403.9 162.4 407.3 163.5C410.7 164.7 414.2 165.8 417.6 167.1C421.0 168.4 424.5 169.8 427.9 171.2C431.3 172.5 434.8 173.7 438.2 175.4C441.6 177.1 446.8 180.2 448.5 181.1"/>
<path d="M306.9 150.0C308.6 150.0 313.7 149.8 317.0 149.9C320.4 150.0 323.7 150.3 327.1 150.6C330.4 151.0 333.8 151.4 337.2 151.9C340.5 152.3 343.9 152.8 347.2 153.3C350.6 153.8 353.9 154.3 357.3 154.9C360.7 155.4 364.0 156.0 367.4 156.6C370.7 157.2 374.1 157.9 377.5 158.6C380.8 159.3 384.2 160.1 387.5 161.0C390.9 161.9 394.2 162.9 397.6 163.8C401.0 164.8 404.3 165.8 407.7 166.8C411.0 167.8 414.4 168.8 417.8 169.9C421.1 171.0 424.5 172.2 427.8 173.3C431.2 174.5 434.5 175.5 437.9 176.8C441.3 178.1 446.3 180.5 448.0 181.2"/>
<path d="M309.7 152.8C311.3 152.9 316.2 153.1 319.5 153.4C322.8 153.7 326.1 154.2 329.3 154.6C332.6 155.1 335.9 155.6 339.2 156.1C342.5 156.6 345.7 157.1 349.0 157.6C352.3 158.1 355.6 158.6 358.9 159.2C362.1 159.7 365.4 160.2 368.7 160.8C372.0 161.4 375.3 162.0 378.5 162.7C381.8 163.4 385.1 164.2 388.4 165.0C391.7 165.8 394.9 166.7 398.2 167.6C401.5 168.4 404.8 169.3 408.1 170.2C411.3 171.1 414.6 171.9 417.9 172.8C421.2 173.7 424.5 174.7 427.7 175.7C431.0 176.6 434.3 177.4 437.6 178.4C440.9 179.3 445.8 181.0 447.4 181.5"/>
<path d="M312.4 155.8C314.0 156.1 318.8 156.8 322.0 157.3C325.2 157.8 328.4 158.3 331.6 158.9C334.8 159.4 338.0 160.0 341.2 160.5C344.4 161.1 347.6 161.5 350.8 162.0C354.0 162.5 357.2 163.1 360.4 163.6C363.6 164.2 366.8 164.6 370.0 165.2C373.2 165.7 376.4 166.3 379.6 166.9C382.8 167.6 386.0 168.4 389.2 169.1C392.4 169.9 395.6 170.7 398.8 171.4C402.1 172.2 405.3 173.0 408.5 173.7C411.7 174.4 414.9 175.1 418.1 175.8C421.3 176.6 424.5 177.4 427.7 178.1C430.9 178.8 434.1 179.4 437.3 180.0C440.5 180.7 445.3 181.7 446.9 182.1"/>
<path d="M315.1 159.4C316.7 159.8 321.4 160.9 324.5 161.5C327.6 162.2 330.7 162.8 333.9 163.4C337.0 164.0 340.1 164.6 343.2 165.2C346.4 165.7 349.5 166.1 352.6 166.6C355.7 167.2 358.9 167.7 362.0 168.2C365.1 168.7 368.2 169.2 371.4 169.7C374.5 170.2 377.6 170.7 380.7 171.3C383.9 172.0 387.0 172.7 390.1 173.4C393.2 174.1 396.3 174.7 399.5 175.4C402.6 176.0 405.7 176.7 408.8 177.3C412.0 177.9 415.1 178.4 418.2 178.9C421.3 179.5 424.5 180.1 427.6 180.6C430.7 181.1 433.8 181.4 437.0 181.8C440.1 182.2 444.8 182.7 446.3 182.8"/>
<path d="M317.8 163.7C319.4 164.1 323.9 165.3 327.0 166.1C330.0 166.8 333.1 167.5 336.1 168.2C339.2 168.8 342.2 169.4 345.3 169.9C348.3 170.5 351.4 170.9 354.4 171.4C357.4 171.9 360.5 172.4 363.5 172.9C366.6 173.4 369.6 173.8 372.7 174.3C375.7 174.8 378.8 175.3 381.8 175.8C384.9 176.4 387.9 177.1 391.0 177.7C394.0 178.3 397.0 178.9 400.1 179.4C403.1 180.0 406.2 180.6 409.2 181.0C412.3 181.5 415.3 181.8 418.4 182.1C421.4 182.5 424.5 183.0 427.5 183.2C430.6 183.5 433.6 183.6 436.7 183.7C439.7 183.8 444.3 183.8 445.8 183.9"/>
<path d="M320.6 168.3C322.1 168.8 326.5 170.1 329.5 170.9C332.4 171.7 335.4 172.6 338.4 173.2C341.4 173.9 344.3 174.3 347.3 174.8C350.3 175.4 353.2 175.8 356.2 176.3C359.2 176.8 362.1 177.3 365.1 177.7C368.1 178.2 371.0 178.6 374.0 179.0C377.0 179.5 379.9 179.9 382.9 180.5C385.9 181.0 388.8 181.6 391.8 182.1C394.8 182.6 397.8 183.1 400.7 183.5C403.7 184.0 406.7 184.5 409.6 184.8C412.6 185.1 415.6 185.2 418.5 185.4C421.5 185.6 424.5 185.9 427.4 185.9C430.4 186.0 433.4 185.9 436.3 185.8C439.3 185.6 443.8 185.3 445.2 185.2"/>
    </g>
  </g>
</svg>
</div>

<!-- ===== splitter ===== -->
<div id="split"></div>
<div class="abs" style="left:633.300px;top:228px;width:2.600px;height:123px;background:#f4f4f4"></div>

<!-- ===== right viewport ===== -->
<div id="vp2">
<svg class="abs" style="left:0;top:0" width="96" height="410" viewBox="0 0 96 410">
  <defs>
    <linearGradient id="sbody" x1="0" y1="0" x2="1" y2="0"><stop offset="0" stop-color="#a2a4a6"/><stop offset=".3" stop-color="#b3b5b7"/><stop offset="1" stop-color="#999b9e"/></linearGradient>
    <linearGradient id="sinner" x1="0" y1="1" x2="1" y2="0"><stop offset="0" stop-color="#727477"/><stop offset=".6" stop-color="#9a9c9e"/><stop offset="1" stop-color="#bdbdbd"/></linearGradient>
  </defs>
  <g fill="none" stroke="#2e1f17" stroke-width=".8">
<path d="M0 40.0L96 5.4"/>
<path d="M0 62.0L96 27.4"/>
<path d="M0 84.0L96 49.4"/>
<path d="M0 106.0L96 71.4"/>
<path d="M0 128.0L96 93.4"/>
<path d="M0 150.0L96 115.4"/>
<path d="M0 172.0L96 137.4"/>
<path d="M0 194.0L96 159.4"/>
<path d="M0 216.0L96 181.4"/>
<path d="M0 238.0L96 203.4"/>
<path d="M0 260.0L96 225.4"/>
<path d="M0 282.0L96 247.4"/>
<path d="M0 304.0L96 269.4"/>
<path d="M0 326.0L96 291.4"/>
<path d="M0 348.0L96 313.4"/>
<path d="M0 370.0L96 335.4"/>
<path d="M0 392.0L96 357.4"/>
<path d="M0 414.0L96 379.4"/>
<path d="M0 436.0L96 401.4"/>
<path d="M0 458.0L96 423.4"/>
<path d="M0 480.0L96 445.4"/>
<path d="M0 502.0L96 467.4"/>
<path d="M0 524.0L96 489.4"/>
<path d="M0 546.0L96 511.4"/>
<path d="M0 568.0L96 533.4"/>
<path d="M0 590.0L96 555.4"/>
<path d="M0 612.0L96 577.4"/>
<path d="M0 634.0L96 599.4"/>
<path d="M0 656.0L96 621.4"/>
<path d="M0 678.0L96 643.4"/>
<path d="M-444.0 0L-87.5 410"/>
<path d="M-426.0 0L-69.5 410"/>
<path d="M-408.0 0L-51.5 410"/>
<path d="M-390.0 0L-33.5 410"/>
<path d="M-372.0 0L-15.5 410"/>
<path d="M-354.0 0L2.5 410"/>
<path d="M-336.0 0L20.5 410"/>
<path d="M-318.0 0L38.5 410"/>
<path d="M-300.0 0L56.5 410"/>
<path d="M-282.0 0L74.5 410"/>
<path d="M-264.0 0L92.5 410"/>
<path d="M-246.0 0L110.5 410"/>
<path d="M-228.0 0L128.5 410"/>
<path d="M-210.0 0L146.5 410"/>
<path d="M-192.0 0L164.5 410"/>
<path d="M-174.0 0L182.5 410"/>
<path d="M-156.0 0L200.5 410"/>
<path d="M-138.0 0L218.5 410"/>
<path d="M-120.0 0L236.5 410"/>
<path d="M-102.0 0L254.5 410"/>
<path d="M-84.0 0L272.5 410"/>
<path d="M-66.0 0L290.5 410"/>
<path d="M-48.0 0L308.5 410"/>
<path d="M-30.0 0L326.5 410"/>
<path d="M-12.0 0L344.5 410"/>
<path d="M6.0 0L362.5 410"/>
<path d="M24.0 0L380.5 410"/>
<path d="M42.0 0L398.5 410"/>
<path d="M60.0 0L416.5 410"/>
<path d="M78.0 0L434.5 410"/>
<path d="M96.0 0L452.5 410"/>
<path d="M114.0 0L470.5 410"/>
<path d="M132.0 0L488.5 410"/>
  </g>
  <path d="M0 178.500L38.800 268.200" fill="none" stroke="#3a2e28" stroke-width="1.200"/>
  <path d="M13.500 279.200L96 242" fill="none" stroke="#3a2e28" stroke-width="1.200"/>
  <path d="M0 0H96V87.500L33 26 0 36.500z" fill="#000"/>
  <path d="M33 0V26L0 36.500M33 26L96 87.500" fill="none" stroke="#9d9994" stroke-width="1.100"/>
  <path d="M37.500 118.800L84.800 102" stroke="#4f7be0" stroke-width="2" stroke-linecap="round"/>
  <!-- small vase -->
  <g transform="translate(-636.500,-85)">
    <path d="M669.700 348.800L673.700 355.800 699 347 695.800 343.500z" fill="#5c4b41"/>
    <path d="M671.3 319.2C671.3 320.4 671.9 322.3 672.3 324.0C672.7 325.7 673.3 327.7 673.7 329.5C674.1 331.3 674.5 333.1 674.8 335.0C675.1 336.9 675.3 338.8 675.3 340.6C675.3 342.4 675.1 344.3 674.8 346.0C674.5 347.7 673.9 349.6 673.6 351.0C673.4 352.4 673.0 353.5 673.3 354.3C673.6 355.1 674.6 355.4 675.5 355.6C676.4 355.9 677.2 355.9 678.4 355.8C679.6 355.7 681.2 355.2 682.5 354.8C683.8 354.4 685.0 353.9 686.3 353.4C687.6 352.8 689.1 352.2 690.5 351.5C691.9 350.8 694.0 351.0 694.6 349.4C695.2 347.8 694.0 344.9 693.9 342.1C693.8 339.3 693.9 336.1 694.2 332.7C694.5 329.3 695.3 324.7 695.8 321.6C696.3 318.5 696.9 316.0 697.3 314.0C697.7 312.0 698.0 310.8 698.0 309.5C698.0 308.2 697.8 306.8 697.3 306.0C696.8 305.2 696.0 304.8 695.0 304.5C694.0 304.2 692.4 304.1 691.1 304.2C689.8 304.3 688.3 304.8 687.0 305.3C685.7 305.8 684.5 306.6 683.2 307.4C681.9 308.2 680.3 309.2 679.0 310.3C677.7 311.4 676.4 312.7 675.3 313.7C674.2 314.7 673.2 315.6 672.5 316.5C671.8 317.4 671.3 317.9 671.3 319.2Z" fill="url(#sbody)"/>
    <path d="M671.3 319.2C671.3 319.9 671.8 320.3 672.3 320.6C672.8 320.9 673.1 321.0 674.0 321.0C674.9 321.0 676.2 320.8 677.5 320.5C678.8 320.2 680.3 319.7 681.6 319.2C682.9 318.7 684.2 318.0 685.5 317.4C686.8 316.8 688.2 316.0 689.5 315.3C690.8 314.6 692.0 313.9 693.0 313.3C694.0 312.7 695.0 312.2 695.8 311.6C696.5 311.1 697.1 310.4 697.5 310.0C697.9 309.6 698.0 309.7 698.0 309.0C698.0 308.3 697.8 306.8 697.3 306.0C696.8 305.2 696.0 304.8 695.0 304.5C694.0 304.2 692.4 304.1 691.1 304.2C689.8 304.3 688.3 304.8 687.0 305.3C685.7 305.8 684.5 306.6 683.2 307.4C681.9 308.2 680.3 309.2 679.0 310.3C677.7 311.4 676.4 312.7 675.3 313.7C674.2 314.7 673.2 315.6 672.5 316.5C671.8 317.4 671.3 318.5 671.3 319.2Z" fill="#d2d2d2"/>
    <path d="M672.8 319.0C672.9 319.5 673.5 319.7 674.3 319.8C675.0 319.9 676.1 319.7 677.3 319.4C678.5 319.1 680.0 318.6 681.3 318.1C682.6 317.6 683.9 317.0 685.2 316.3C686.5 315.6 687.9 314.9 689.1 314.2C690.3 313.5 691.6 312.8 692.6 312.2C693.6 311.6 694.5 311.0 695.2 310.5C695.9 310.0 696.4 309.6 696.6 309.0C696.8 308.4 696.6 307.2 696.3 306.6C695.9 306.0 695.3 305.8 694.5 305.6C693.7 305.4 692.5 305.3 691.3 305.4C690.1 305.5 688.8 305.9 687.5 306.4C686.2 306.9 685.1 307.6 683.8 308.4C682.5 309.2 681.1 310.2 679.8 311.2C678.5 312.2 677.2 313.4 676.2 314.4C675.2 315.4 674.2 316.2 673.6 317.0C673.0 317.8 672.7 318.5 672.8 319.0Z" fill="url(#sinner)"/>
  </g>
</svg>
<div class="info" style="top:8.500px;color:#d0141c">打印机(COM3):断开</div>
<div class="info" style="top:23px">长(X) (mm):857.14</div>
<div class="info" style="top:33px">宽(Y) (mm):422.42</div>
<div class="info" style="top:43px">高(Z) (mm):1928.14</div>
<div class="info" style="top:61.500px">网格 (长x宽):500x1250</div>
</div>

<!-- ===== view toolbar ===== -->
<div class="abs" style="left:0;top:85px;width:750px;height:0">
  <div class="tb" style="left:580.5px"><svg width="15" height="15.500" viewBox="0 0 15 15.500" style="position:absolute;left:-1px;top:-1px"><path d="M4.500 3.500h6M7.500 3.500v6.500M3.500 8.500h8M4 11.500h7" stroke="#4a4a4a" stroke-width="1.300" fill="none"/></svg></div>
  <div class="tb" style="left:599.7px"><svg width="15" height="15.500" viewBox="0 0 15 15.500" style="position:absolute;left:-1px;top:-1px"><path d="M4.500 5l2-1.800h5v6.300l-2 1.800h-5z" fill="#dfe8f3" stroke="#5a6f8c" stroke-width=".8"/><path d="M4.500 5h5v6.300M9.500 5l2-1.800" fill="none" stroke="#5a6f8c" stroke-width=".7"/></svg></div>
  <div class="tb" style="left:618.9px"><svg width="15" height="15.500" viewBox="0 0 15 15.500" style="position:absolute;left:-1px;top:-1px"><rect x="2.800" y="3.200" width="7.200" height="8.600" fill="#eaf3fc" stroke="#4f86c6" stroke-width=".8"/><rect x="2.800" y="3.200" width="7.200" height="2" fill="#6aa0dc"/><rect x="6" y="7.500" width="4" height="4.300" fill="#fff" stroke="#4f86c6" stroke-width=".6"/><path d="M11.300 7l1.600 0-.8 1.200z" fill="#333"/></svg></div>
  <div class="tb" style="left:638.0px"><svg width="15" height="15.500" viewBox="0 0 15 15.500" style="position:absolute;left:-1px;top:-1px"><rect x="2.300" y="3.200" width="7.200" height="8.600" fill="#eaf3fc" stroke="#4f86c6" stroke-width=".8"/><rect x="2.300" y="3.200" width="7.200" height="2" fill="#6aa0dc"/><rect x="5.500" y="7.500" width="4" height="4.300" fill="#fff" stroke="#4f86c6" stroke-width=".6"/><circle cx="12" cy="7.800" r="1.300" fill="#222"/></svg></div>
  <div class="tb" style="left:657.2px"><svg width="15" height="15.500" viewBox="0 0 15 15.500" style="position:absolute;left:-1px;top:-1px"><path d="M4.500 6l3-1.500 3.500 1.500v4l-3.500 1.500-3-1.500z" fill="#b9b9b9" stroke="#8c8c8c" stroke-width=".6"/><path d="M12.500 8h.8" stroke="#888" stroke-width=".8"/></svg></div>
  <div class="tb" style="left:676.2px"><svg width="15" height="15.500" viewBox="0 0 15 15.500" style="position:absolute;left:-1px;top:-1px"><path d="M3.500 8.500c1-3 4-3.500 6-2l1-1.200.8 3.700-3.800-.3 1-1.100c-1.500-.9-3-.5-3.800 1.200z" fill="#58b14a"/><circle cx="5" cy="10" r="1.300" fill="#9ad08e"/></svg></div>
  <div class="tb" style="left:695.3px"><svg width="15" height="15.500" viewBox="0 0 15 15.500" style="position:absolute;left:-1px;top:-1px"><rect x="4" y="3.500" width="7" height="8.500" fill="#c9c9c9" stroke="#8a8a8a" stroke-width=".7"/><rect x="5.500" y="3.500" width="4" height="2.300" fill="#8f8f8f"/><rect x="6.300" y="8.300" width="2.400" height="2.400" fill="#f4f4f4"/></svg></div>
  <div class="tb" style="left:714.2px"><svg width="15" height="15.500" viewBox="0 0 15 15.500" style="position:absolute;left:-1px;top:-1px"><circle cx="7.500" cy="7.800" r="3.800" fill="#dcebfb" stroke="#5b93d6" stroke-width=".9"/><path d="M5.800 8.300c.5-1.800 2.500-2 3.400-.8l.7-.7.200 2.200-2.200-.2.700-.7" fill="#3f7fd0"/></svg></div>
</div>

<!-- ===== right tab strip ===== -->
<div id="rstrip">
<svg class="abs" style="left:0;top:0" width="17.500" height="410" viewBox="0 0 17.500 410">
  <defs><linearGradient id="tg" x1="0" y1="0" x2="1" y2="0"><stop offset="0" stop-color="#fff"/><stop offset="1" stop-color="#ececec"/></linearGradient></defs>
  <rect x="12.700" y="0" width="4.800" height="410" fill="#f4f8fc"/>
  <path d="M.3 .800H12.500V83.500L.3 95" fill="#fff" stroke="#dcdcdc" stroke-width=".7"/>
  <path d="M12.500 84V163.500L.5 177.500V95.500z" fill="url(#tg)"/>
  <path d="M12.500 84V163.500L.5 177.500" fill="none" stroke="#7ea3dc" stroke-width=".9"/>
  <path d="M12.800 0V84M12.800 163.500V396" fill="none" stroke="#a9c3ea" stroke-width=".8"/>
  <g fill="none" stroke="#7ea3dc" stroke-width=".8">
    <path d="M12.800 320l4.700 3.500M12.800 332.500l4.700 3.500M12.800 345l4.700 3.500M12.800 357.500l4.700 3.500M12.800 370l4.700 3.500M12.800 382.500l4.700 3.500M12.800 395l4.700 3.500"/>
  </g>
  <!-- tab icons -->
  <rect x="3.200" y="30.800" width="5" height="5.400" rx=".8" fill="#fff" stroke="#555" stroke-width=".7"/>
  <path d="M8.200 32.500h1.300v5h-4.600v-1.300" fill="none" stroke="#555" stroke-width=".7"/>
  <rect x="3.300" y="101.800" width="5.600" height="5" rx=".8" fill="#e3f0fb" stroke="#5b86c0" stroke-width=".7"/>
  <path d="M4.500 106.800v1.400h4.400" fill="none" stroke="#555" stroke-width=".6"/>
</svg>
<div class="vt" style="left:11px;top:40px">管理</div>
<div class="vt" style="left:11px;top:110.800px">GCode 代码</div>
</div>

<!-- ===== status bar ===== -->
<div id="status"></div>
<div class="t" style="left:-9px;top:495.500px;color:#222">C:\高度科技\Desktop\samp2.stl</div>
<div class="abs" style="left:149px;top:496px;width:1px;height:9px;background:#c8c8c8"></div>
<div class="t" style="left:152.500px;top:495.500px;color:#222">共 36966 三角面</div>

</body>
</html>
